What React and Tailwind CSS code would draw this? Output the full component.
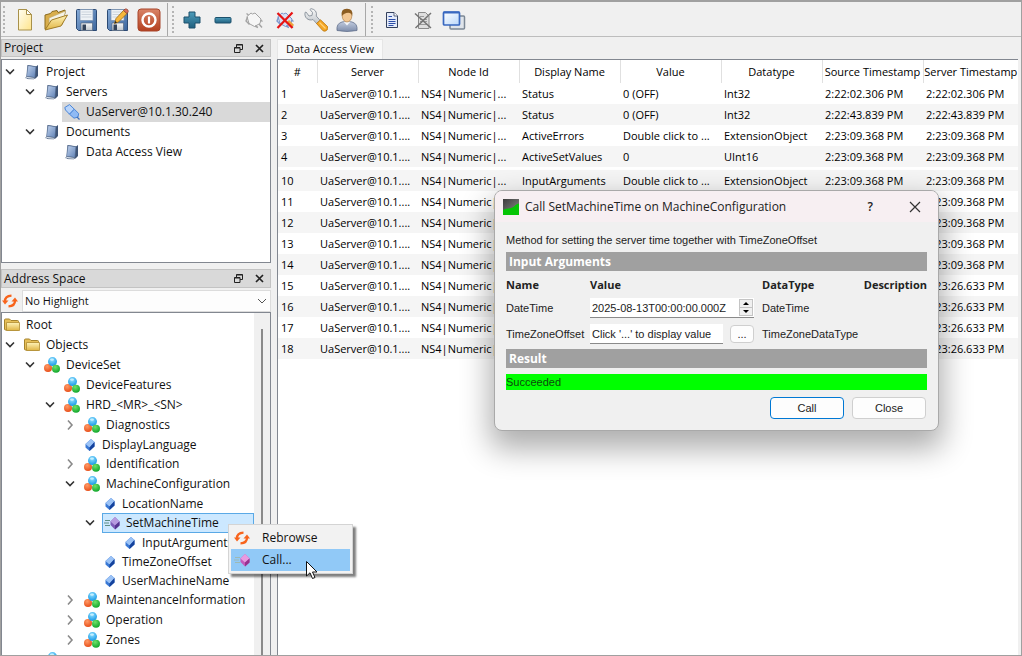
import React from "react";

/* ---------- shared gradients ---------- */

function Gradients() {
  return (
    <svg className="absolute size-0" aria-hidden="true">
      <defs>
        <linearGradient id="paper" x1="0" y1="0" x2="1" y2="1">
          <stop offset="0" stopColor="#fffef2" />
          <stop offset="1" stopColor="#ffe48a" />
        </linearGradient>
        <linearGradient id="folder" x1="0" y1="0" x2="0" y2="1">
          <stop offset="0" stopColor="#fff3b8" />
          <stop offset="1" stopColor="#e0b545" />
        </linearGradient>
        <linearGradient id="disk" x1="0" y1="0" x2="1" y2="1">
          <stop offset="0" stopColor="#86abd8" />
          <stop offset="1" stopColor="#3c659c" />
        </linearGradient>
        <linearGradient id="metal" x1="0" y1="0" x2="0" y2="1">
          <stop offset="0" stopColor="#fafafa" />
          <stop offset="1" stopColor="#bdc3c9" />
        </linearGradient>
        <linearGradient id="power" x1="0" y1="0" x2="0" y2="1">
          <stop offset="0" stopColor="#d98468" />
          <stop offset="1" stopColor="#b4401f" />
        </linearGradient>
        <linearGradient id="teal" x1="0" y1="0" x2="0" y2="1">
          <stop offset="0" stopColor="#4d9cba" />
          <stop offset="1" stopColor="#20607f" />
        </linearGradient>
        <linearGradient id="book" x1="0" y1="0" x2="1" y2="1">
          <stop offset="0" stopColor="#c3d4ee" />
          <stop offset="1" stopColor="#5e80b4" />
        </linearGradient>
        <linearGradient id="shirt" x1="0" y1="0" x2="0" y2="1">
          <stop offset="0" stopColor="#c5cfe2" />
          <stop offset="1" stopColor="#7e8dab" />
        </linearGradient>
        <linearGradient id="screen" x1="0" y1="0" x2="1" y2="1">
          <stop offset="0" stopColor="#ffffff" />
          <stop offset="1" stopColor="#b9d7fa" />
        </linearGradient>
        <radialGradient id="ballBlue" cx="0.45" cy="0.3" r="0.7">
          <stop offset="0" stopColor="#8fe0ff" />
          <stop offset="1" stopColor="#1697e6" />
        </radialGradient>
        <radialGradient id="ballRed" cx="0.4" cy="0.3" r="0.7">
          <stop offset="0" stopColor="#ff9a66" />
          <stop offset="1" stopColor="#e8501a" />
        </radialGradient>
        <radialGradient id="ballGreen" cx="0.4" cy="0.3" r="0.7">
          <stop offset="0" stopColor="#6fe06a" />
          <stop offset="1" stopColor="#12a82c" />
        </radialGradient>
        <linearGradient id="app" x1="0" y1="0" x2="1" y2="1">
          <stop offset="0" stopColor="#3c3c3c" />
          <stop offset="1" stopColor="#8d8d8d" />
        </linearGradient>
      </defs>
    </svg>
  );
}

/* ---------- toolbar icons ---------- */

const NewIcon = () => (
  <svg className="size-6" viewBox="0 0 24 24">
    <path d="M5.500 1.500h8l5 5v15.500h-13z" fill="url(#paper)" stroke="#a8914a" />
    <path d="M13.500 1.500v5h5z" fill="#fff" stroke="#a8914a" strokeLinejoin="round" />
  </svg>
);

const OpenIcon = () => (
  <svg className="size-6" viewBox="0 0 24 24">
    <path d="M1 21V7l5.500-1.500L8 3.500l5-1 1 2 7-2.500v3L16 17z" fill="#d9ae4c" stroke="#8a6a1e" strokeLinejoin="round" />
    <path d="M5 10l16.500-7-3 13.500-13 4z" fill="#f4f2e6" stroke="#b9a466" strokeWidth=".6" />
    <path d="M1 22L7.500 12l16-5L17 18z" fill="url(#folder)" stroke="#a07c28" strokeLinejoin="round" />
  </svg>
);

const Floppy = () => (
  <>
    <path d="M1.500 2.500q0-1 1-1h18q1 0 1 1v20H3.500l-2-2z" fill="url(#disk)" stroke="#2c4a74" />
    <path d="M5 1.500h13v11H5z" fill="#eef2f6" stroke="#7890b0" strokeWidth=".7" />
    <path d="M6.500 4h10M6.500 6.500h10M6.500 9h10" stroke="#c7d0da" strokeWidth=".9" />
    <path d="M6 15h11.500v7.500H6z" fill="url(#metal)" stroke="#56697f" strokeWidth=".7" />
    <path d="M7.500 16.500h3.500V22H7.500z" fill="#33435a" />
  </>
);

const SaveIcon = () => (
  <svg className="size-6" viewBox="0 0 24 24"><Floppy /></svg>
);

const SaveAsIcon = () => (
  <svg className="size-6" viewBox="0 0 24 24">
    <Floppy />
    <path d="M8.500 15.500l1.500-5L17.500 2.500l3.500 3-8.500 8.500z" fill="#f6b73c" stroke="#9a6a12" strokeWidth=".8" />
    <path d="M17.500 2.500L19 1q1.500-.5 2.700.8t.3 2.400L21 5.500z" fill="#d8705a" stroke="#8d3c2c" strokeWidth=".6" />
    <path d="M8.500 15.500l.8-2.500 1.700 1.500z" fill="#222" />
  </svg>
);

const PowerIcon = () => (
  <svg className="size-6" viewBox="0 0 24 24">
    <rect x="1" y="1" width="22" height="22" rx="3" fill="url(#power)" stroke="#a8452a" />
    <circle cx="12" cy="12" r="6.500" fill="none" stroke="#fff" strokeWidth="2.400" />
    <path d="M12 8.500v7" stroke="#fff" strokeWidth="2.200" />
  </svg>
);

const PlusIcon = () => (
  <svg className="size-6" viewBox="0 0 24 24">
    <path d="M9 4h6v5h5v6h-5v5H9v-5H4V9h5z" fill="url(#teal)" stroke="#1c516c" strokeLinejoin="round" />
  </svg>
);

const MinusIcon = () => (
  <svg className="size-6" viewBox="0 0 24 24">
    <rect x="4" y="9.500" width="16" height="5.500" rx="1" fill="url(#teal)" stroke="#1c516c" />
  </svg>
);

const Plug = ({ fill, stroke }) => (
  <g fill={fill} stroke={stroke} strokeLinejoin="round">
    <path d="M5 8.500L9 5l1.500 1L13 5l6 6-1 4.500-5.500 3L7 15.500z" />
    <path d="M5.500 9L4 13l3.500 3.500M13 18l3 1.500M18.500 12l2 1.500M4.500 5.500l2 1.500M17 16l3 3.500" fill="none" strokeWidth="1.400" />
  </g>
);

const ConnectIcon = () => (
  <svg className="size-6" viewBox="0 0 24 24"><Plug fill="#f6f6f6" stroke="#a3a3a3" /></svg>
);

const DisconnectIcon = () => (
  <svg className="size-6" viewBox="0 0 24 24">
    <Plug fill="#d6e0f6" stroke="#7c96cc" />
    <path d="M15 13l5 5" stroke="#eda23c" strokeWidth="3" />
    <path d="M4.500 5l15 15M19.500 4.500l-15 15.500" stroke="#e81414" strokeWidth="2.200" />
  </svg>
);

const WrenchIcon = () => (
  <svg className="size-6" viewBox="0 0 24 24">
    <path d="M1 4.500Q.2 10 5 11.800q2.500.5 4-.3l4 4.500 3.500-3.200-4.200-4.700Q13.500 1.800 7 .6L6 1.500l2.500 3-.5 3-3 .5L2 4z" fill="url(#metal)" stroke="#87909a" strokeWidth=".9" strokeLinejoin="round" />
    <path d="M12.500 15.500l4-3.700 7 6.700q1 2-.7 3.700t-3.800.6z" fill="#f5a623" stroke="#b6740c" strokeWidth=".8" />
    <path d="M15.500 14.500l6 6" stroke="#ffd27a" strokeWidth="1.200" />
  </svg>
);

const UserIcon = () => (
  <svg className="size-6" viewBox="0 0 24 24">
    <path d="M2 22.500q-.8-7 5-8.500l5-1 5 1q5.800 1.500 5 8.500-10 2-20 0z" fill="url(#shirt)" stroke="#62708c" strokeWidth=".8" />
    <path d="M8.500 13.500l3.500 4 3.500-4" fill="#f4f6fa" />
    <ellipse cx="12" cy="8" rx="4.800" ry="6" fill="#f3c793" stroke="#a87336" strokeWidth=".6" />
    <path d="M6.800 8Q5.500.6 12 .8q6.500 0 5.200 7.200-1-3.200-4-3.200Q9 5 6.800 8z" fill="#8c5d22" />
  </svg>
);

const DocIcon = () => (
  <svg className="size-6" viewBox="0 0 24 24">
    <path d="M6.500 4.500h7.500l3.500 3.500v11.500h-11z" fill="#e4ebfa" stroke="#33405c" />
    <path d="M14 4.500V8h3.500" fill="#fff" stroke="#33405c" strokeWidth=".8" />
    <path d="M8.500 8.500h3.500M8.500 11.500h7M8.500 13.500h7M8.500 15.500h7M8.500 17.500h5" stroke="#2c4ea8" />
  </svg>
);

const DocOffIcon = () => (
  <svg className="size-6" viewBox="0 0 24 24">
    <path d="M7.500 4.500h7L18 8v12.500H7.500z" fill="#dedede" stroke="#8a8a8a" />
    <path d="M9 8.500h4M9 11.500h7M9 13.500h7M9 16.500h7" stroke="#9a9a9a" />
    <path d="M4 5.500l16 14.500M20 5L4.500 20" stroke="#747474" strokeWidth="1.500" />
  </svg>
);

const WindowsIcon = () => (
  <svg className="size-6" viewBox="0 0 24 24">
    <rect x="8" y="8" width="14.500" height="13" rx="1" fill="#dfe4ea" stroke="#7b8794" strokeWidth="1.500" />
    <rect x="1.500" y="4" width="16" height="13" rx="1" fill="url(#screen)" stroke="#3868c0" strokeWidth="1.700" />
    <path d="M1.500 4.500h16" stroke="#3868c0" strokeWidth="2" />
  </svg>
);

/* ---------- tree and panel icons ---------- */

const BookIcon = () => (
  <svg className="size-4 shrink-0" viewBox="0 0 16 16">
    <path d="M3.500 1l8.500 1.500 2-1.500v11l-2.500 2.500-8.500.5z" fill="#3f5475" />
    <path d="M4 1.500l8 1.200-1 11L2.500 12.500z" fill="url(#book)" stroke="#4a6187" strokeWidth=".6" />
    <path d="M1.500 13.700l1.300-1.200 8.200 1.200-1 1.300-6-.3z" fill="#dfe6f0" stroke="#3f5475" strokeWidth=".5" />
  </svg>
);

const ServerPlugIcon = () => (
  <svg className="size-4 shrink-0" viewBox="0 0 16 16">
    <path d="M.8 3.500L5.500.6l4.800 4.600-4.800 5L1.500 6z" fill="#b8d4fa" stroke="#4b86d8" strokeLinejoin="round" />
    <path d="M10.300 5.200l4.400 4.300-.7 3.500-4 1.200-4.500-4z" fill="#8fbaf4" stroke="#4b86d8" strokeLinejoin="round" />
    <path d="M13 13l2.500 2.500" stroke="#3f6fb8" strokeWidth="1.300" />
  </svg>
);

const FolderIcon = () => (
  <svg className="size-4 shrink-0" viewBox="0 0 16 16">
    <path d="M.5 3q0-1 1-1h4L7 3.500h6.500q1 0 1 1V13h-13q-1 0-1-1z" fill="#e6bf58" stroke="#a5832c" />
    <path d="M2.500 5.500h13v8h-13z" fill="url(#folder)" stroke="#b08c30" strokeWidth=".8" />
  </svg>
);

const ObjectIcon = () => (
  <svg className="size-4 shrink-0" viewBox="0 0 16 16">
    <circle cx="4" cy="11" r="4" fill="url(#ballRed)" />
    <circle cx="8.500" cy="4.600" r="4.500" fill="url(#ballBlue)" />
    <circle cx="12" cy="11.700" r="4" fill="url(#ballGreen)" />
    <ellipse cx="8" cy="2.600" rx="2" ry="1.200" fill="#d6f5ff" opacity=".8" />
  </svg>
);

const VariableIcon = () => (
  <svg className="h-4 w-3 shrink-0" viewBox="0 0 12 16">
    <path d="M7 2l3.500 3v4.500L5.500 14 1.500 10.500V7z" fill="#3b7ad6" />
    <path d="M7 2l3.500 3-5 5.500L1.500 7z" fill="#9cc3f6" />
    <path d="M5.500 10.500V14l5-4.500V5z" fill="#15429c" />
  </svg>
);

const MethodIcon = ({ pink }) => (
  <svg className="size-4 shrink-0" viewBox="0 0 16 16">
    <path d="M1 5.500h5M0 8h5M1 10.500h5" stroke={pink ? "#9db9b4" : "#5f8f86"} strokeWidth="1" />
    <path d="M11 2l4.500 4.500v4L11 14.500 6.500 10V6.500z" fill={pink ? "#c458bc" : "#7d5cb8"} />
    <path d="M11 2l4.500 4.500L11 10.500l-4.500-4z" fill={pink ? "#e79ae0" : "#b69be0"} />
    <path d="M11 10.500v4l4.500-4v-4z" fill={pink ? "#97308f" : "#543490"} />
  </svg>
);

const RefreshIcon = () => (
  <svg className="size-4 shrink-0" viewBox="0 0 16 16">
    <g fill="none" stroke="#f8641c" strokeWidth="2.300">
      <path d="M3 8.500Q2.800 3 9.500 2.700" />
      <path d="M13 7.500Q13.200 13 6.500 13.300" />
    </g>
    <path d="M0 7.500h6.500L3 11.500zM16 8.500H9.500L13 4.500z" fill="#f8641c" />
  </svg>
);

const Chevron = ({ open }) => (
  <svg className="size-3" viewBox="0 0 12 12" fill="none" stroke={open ? "#333" : "#8a8a8a"} strokeWidth="1.600">
    {open ? <path d="M2 3.500l4 4 4-4" /> : <path d="M4 1.500l4 4.500-4 4.500" />}
  </svg>
);

/* ---------- data ---------- */

const projectTree = [
  { depth: 0, open: true, icon: BookIcon, label: "Project" },
  { depth: 1, open: true, icon: BookIcon, label: "Servers" },
  { depth: 2, icon: ServerPlugIcon, label: "UaServer@10.1.30.240", muted: true },
  { depth: 1, open: true, icon: BookIcon, label: "Documents" },
  { depth: 2, icon: BookIcon, label: "Data Access View" },
];

const addressTree = [
  { depth: -1, icon: FolderIcon, label: "Root" },
  { depth: 0, open: true, icon: FolderIcon, label: "Objects" },
  { depth: 1, open: true, icon: ObjectIcon, label: "DeviceSet" },
  { depth: 2, icon: ObjectIcon, label: "DeviceFeatures" },
  { depth: 2, open: true, icon: ObjectIcon, label: "HRD_<MR>_<SN>" },
  { depth: 3, open: false, icon: ObjectIcon, label: "Diagnostics" },
  { depth: 3, icon: VariableIcon, label: "DisplayLanguage" },
  { depth: 3, open: false, icon: ObjectIcon, label: "Identification" },
  { depth: 3, open: true, icon: ObjectIcon, label: "MachineConfiguration" },
  { depth: 4, icon: VariableIcon, label: "LocationName" },
  { depth: 4, open: true, icon: MethodIcon, label: "SetMachineTime", selected: true },
  { depth: 5, icon: VariableIcon, label: "InputArguments" },
  { depth: 4, icon: VariableIcon, label: "TimeZoneOffset" },
  { depth: 4, icon: VariableIcon, label: "UserMachineName" },
  { depth: 3, open: false, icon: ObjectIcon, label: "MaintenanceInformation" },
  { depth: 3, open: false, icon: ObjectIcon, label: "Operation" },
  { depth: 3, open: false, icon: ObjectIcon, label: "Zones" },
  { depth: 1, icon: ObjectIcon, label: "" },
];

const rows = [
  ["1", "Status", "0 (OFF)", "Int32", "2:22:02.306 PM"],
  ["2", "Status", "0 (OFF)", "Int32", "2:22:43.839 PM"],
  ["3", "ActiveErrors", "Double click to ...", "ExtensionObject", "2:23:09.368 PM"],
  ["4", "ActiveSetValues", "0", "UInt16", "2:23:09.368 PM"],
  null,
  ["10", "InputArguments", "Double click to ...", "ExtensionObject", "2:23:09.368 PM"],
  ["11", "", "", "", "2:23:09.368 PM"],
  ["12", "", "", "", "2:23:09.368 PM"],
  ["13", "", "", "", "2:23:09.368 PM"],
  ["14", "", "", "", "2:23:09.368 PM"],
  ["15", "", "", "", "2:23:26.633 PM"],
  ["16", "", "", "", "2:23:26.633 PM"],
  ["17", "", "", "", "2:23:26.633 PM"],
  ["18", "", "", "", "2:23:26.633 PM"],
];

const indent = {
  "-1": "pl-0",
  0: "pl-0",
  1: "pl-5",
  2: "pl-10",
  3: "pl-[60px]",
  4: "pl-20",
  5: "pl-[100px]",
};

/* ---------- pieces ---------- */

function Tree({ items, label }) {
  return (
    <ul role="tree" aria-label={label}>
      {items.map((n, i) => {
        const Icon = n.icon;
        const small = Icon === VariableIcon;
        return (
          <li
            key={i}
            role="treeitem"
            aria-selected={!!n.selected}
            className={`flex items-stretch ${small ? "h-[19px]" : "h-5"} ${indent[n.depth]}`}
          >
            {n.depth >= 0 && (
              <span className="flex w-5 shrink-0 items-center pl-[2px]">
                {n.open !== undefined && (
                  <button type="button" aria-label={n.open ? "Collapse" : "Expand"}>
                    <Chevron open={n.open} />
                  </button>
                )}
              </span>
            )}
            <span
              className={`flex min-w-0 items-center gap-[6px] whitespace-nowrap ${
                n.selected
                  ? "grow border border-dotted border-[#123f66] bg-[#cce8ff] pl-px outline outline-[#5aa9e6] -outline-offset-1"
                  : "pl-[2px]"
              } ${n.muted ? "grow bg-[#d9d9d9]" : ""}`}
            >
              <Icon />
              {n.label}
            </span>
          </li>
        );
      })}
    </ul>
  );
}

function DockTitle({ children }) {
  return (
    <header className="flex h-[19px] items-center border border-[#c3c3c3] bg-[#d9d9d9] pr-[6px] pl-[2px]">
      <h2 className="grow">{children}</h2>
      <button type="button" aria-label="Float" className="mr-3">
        <svg className="size-[9px]" viewBox="0 0 9 9" fill="none" stroke="#222">
          <path d="M2.500 3V.5h6v5H6M2.500 1h6M.5 3.500h5.500v5H.5zM.5 4h5.500" />
        </svg>
      </button>
      <button type="button" aria-label="Close">
        <svg className="size-[9px]" viewBox="0 0 9 9" stroke="#222" strokeWidth="1.700">
          <path d="M1 1l7 7M8 1L1 8" />
        </svg>
      </button>
    </header>
  );
}

function Handle() {
  return <span className="my-[3px] w-[3px] shrink-0 border-l-2 border-dotted border-[#b4b4b4]" />;
}

function ToolButton({ label, children }) {
  return (
    <button type="button" aria-label={label} className="flex w-[31px] items-center justify-center">
      {children}
    </button>
  );
}

function Toolbar() {
  return (
    <div role="toolbar" className="flex h-[35px] shrink-0 border-b border-[#bdbdbd] bg-[#f0f0f0] pt-px pl-[2px]">
      <Handle />
      <div className="flex pr-[3px] pl-[3px]">
        <ToolButton label="New"><NewIcon /></ToolButton>
        <ToolButton label="Open"><OpenIcon /></ToolButton>
        <ToolButton label="Save"><SaveIcon /></ToolButton>
        <ToolButton label="Save as"><SaveAsIcon /></ToolButton>
        <ToolButton label="Exit"><PowerIcon /></ToolButton>
      </div>
      <div className="flex border-l border-[#a8a8a8] pr-[3px] pl-[4px]">
        <Handle />
        <span className="w-px" />
        <ToolButton label="Add server"><PlusIcon /></ToolButton>
        <ToolButton label="Remove server"><MinusIcon /></ToolButton>
        <ToolButton label="Connect"><ConnectIcon /></ToolButton>
        <ToolButton label="Disconnect"><DisconnectIcon /></ToolButton>
        <ToolButton label="Properties"><WrenchIcon /></ToolButton>
        <ToolButton label="Change user"><UserIcon /></ToolButton>
      </div>
      <div className="flex border-l border-[#a8a8a8] pl-[5px]">
        <Handle />
        <span className="w-[2px]" />
        <ToolButton label="Add document"><DocIcon /></ToolButton>
        <ToolButton label="Remove document"><DocOffIcon /></ToolButton>
        <ToolButton label="Windows"><WindowsIcon /></ToolButton>
      </div>
    </div>
  );
}

function DataTable() {
  const headers = ["#", "Server", "Node Id", "Display Name", "Value", "Datatype", "Source Timestamp", "Server Timestamp"];
  return (
    <table className="w-full table-fixed border-collapse text-left text-[11px] text-black">
      <colgroup>
        <col className="w-[39px]" />
        <col className="w-[101px]" />
        <col className="w-[101px]" />
        <col className="w-[101px]" />
        <col className="w-[101px]" />
        <col className="w-[101px]" />
        <col className="w-[101px]" />
        <col />
      </colgroup>
      <thead>
        <tr className="h-[23px]">
          {headers.map((h, i) => (
            <th key={h} className={`p-0 text-center font-normal whitespace-nowrap ${i < 7 ? "border-r border-[#e0e0e0]" : ""}`}>
              {h}
            </th>
          ))}
        </tr>
      </thead>
      <tbody>
        {rows.map((r, i) =>
          r === null ? (
            <tr key={i} className="h-[3px]"><td colSpan={8} className="p-0" /></tr>
          ) : (
            <tr key={i} className={`h-[21px] ${i % 2 === 1 ? "bg-[#f5f5f5]" : ""}`}>
              {[r[0], "UaServer@10.1....", "NS4|Numeric|...", r[1], r[2], r[3], r[4], r[4]].map((c, k) => (
                <td key={k} className="overflow-hidden p-0 pl-[3px] whitespace-nowrap">{c}</td>
              ))}
            </tr>
          ),
        )}
      </tbody>
    </table>
  );
}

function CallDialog() {
  return (
    <section
      role="dialog"
      aria-label="Call SetMachineTime on MachineConfiguration"
      className="absolute top-[188px] left-[493px] w-[445px] overflow-hidden rounded-lg border border-[#a9a9a9] bg-[#f0f0f0] font-['Liberation_Sans',sans-serif] text-[11px] leading-4 text-[#222] shadow-[0_14px_30px_4px_rgba(0,0,0,0.32)]"
    >
      <header className="flex h-[31px] items-center bg-[#f7eff2] pr-[17px] pl-2 font-['Open_Sans','Noto_Sans',sans-serif] text-xs">
        <svg className="mr-[6px] size-4" viewBox="0 0 16 16">
          <path d="M0 0h16v16H0z" fill="url(#app)" />
          <path d="M0 16v-5q2-1.500 5-1.500 5-.500 7-3Q13.500 5 16 4.500V16z" fill="#06c506" />
        </svg>
        <h2 className="grow">Call SetMachineTime on MachineConfiguration</h2>
        <button type="button" aria-label="Help" className="mr-9 font-semibold">?</button>
        <button type="button" aria-label="Close dialog">
          <svg className="size-3" viewBox="0 0 12 12" stroke="#333" strokeWidth="1.200">
            <path d="M1 1l10 10M11 1L1 11" />
          </svg>
        </button>
      </header>

      <div className="px-[11px] pt-[10px] pb-[11px]">
        <p>Method for setting the server time together with TimeZoneOffset</p>
        <h3 className="mt-[4px] h-[19px] bg-[#a0a0a0] pl-[3px] font-['Open_Sans',sans-serif] text-xs leading-[19px] font-bold text-white">Input Arguments</h3>

        <div className="mt-[6px] grid grid-cols-[84px_164px_1fr_66px] items-center gap-y-[5px]">
          <b className="font-['Open_Sans',sans-serif]">Name</b>
          <b className="font-['Open_Sans',sans-serif]">Value</b>
          <b className="pl-2 font-['Open_Sans',sans-serif]">DataType</b>
          <b className="justify-self-end font-['Open_Sans',sans-serif]">Description</b>

          <label htmlFor="dt">DateTime</label>
          <span className="flex h-5 items-stretch border-b border-[#8a8a8a] bg-white">
            <input id="dt" defaultValue="2025-08-13T00:00:00.000Z" className="w-0 grow bg-white px-[2px] outline-none" />
            <span className="m-px flex w-[14px] flex-col border border-[#c4c4c4] bg-[#f0f0f0]">
              <button type="button" aria-label="Increase" className="flex grow items-center justify-center border-b border-[#c4c4c4]">
                <svg className="h-[3px] w-[6px]" viewBox="0 0 6 3"><path d="M0 3l3-3 3 3z" /></svg>
              </button>
              <button type="button" aria-label="Decrease" className="flex grow items-center justify-center">
                <svg className="h-[3px] w-[6px]" viewBox="0 0 6 3"><path d="M0 0l3 3 3-3z" /></svg>
              </button>
            </span>
          </span>
          <span className="pl-2">DateTime</span>
          <span />

          <label htmlFor="tz">TimeZoneOffset</label>
          <span className="flex h-[22px] items-center justify-between">
            <input id="tz" defaultValue="Click '...' to display value" className="h-5 w-[133px] border-b border-[#8a8a8a] bg-white px-[2px] outline-none" />
            <button type="button" className="h-[18px] w-6 rounded border border-[#cfcfcf] bg-[#fdfdfd] leading-3">...</button>
          </span>
          <span className="pl-2">TimeZoneDataType</span>
        </div>

        <h3 className="mt-[4px] h-[19px] bg-[#a0a0a0] pl-[3px] font-['Open_Sans',sans-serif] text-xs leading-[19px] font-bold text-white">Result</h3>
        <output className="mt-[6px] block h-4 bg-[#00ff00] text-[#0d4a0d]">Succeeded</output>

        <div className="mt-[7px] flex justify-end gap-2 pr-px">
          <button type="button" className="h-[22px] w-[74px] rounded border border-[#0078d4] bg-[#fdfdfd]">Call</button>
          <button type="button" className="h-[22px] w-[74px] rounded border border-[#cfcfcf] bg-[#fdfdfd]">Close</button>
        </div>
      </div>
    </section>
  );
}

function ContextMenu() {
  return (
    <div
      role="menu"
      className="absolute top-[522px] left-[227px] w-[125px] border border-[#d4d4d4] bg-[#f2f2f2] p-[2px] shadow-[3px_3px_2px_rgba(0,0,0,0.5)]"
    >
      <button type="button" role="menuitem" className="flex h-[22px] w-full items-center gap-3 pl-[3px]">
        <RefreshIcon />
        Rebrowse
      </button>
      <button type="button" role="menuitem" className="flex h-[22px] w-full items-center gap-3 bg-[#91c9f7] pl-[3px]">
        <MethodIcon pink />
        Call...
      </button>
    </div>
  );
}

export default function App() {
  return (
    <div className="relative flex h-screen flex-col overflow-hidden border border-t-2 border-[#a0a0a0] bg-[#f0f0f0] font-['Open_Sans','Noto_Sans',sans-serif] text-xs leading-4 text-[#111]">
      <Gradients />
      <Toolbar />
      <div className="flex min-h-0 grow gap-[6px] pt-[2px] pr-[3px]">
        <aside className="flex w-[270px] shrink-0 flex-col">
          <DockTitle>Project</DockTitle>
          <div className="mt-[2px] h-[204px] shrink-0 border border-[#828790] bg-white pt-[2px]">
            <Tree items={projectTree} label="Project" />
          </div>
          <div className="mt-[6px]"><DockTitle>Address Space</DockTitle></div>
          <div className="mt-[2px] flex h-[22px] shrink-0 items-center">
            <button type="button" aria-label="Refresh" className="mr-1 ml-px"><RefreshIcon /></button>
            <div className="relative h-full grow border border-[#dcdcdc] bg-[#fdfdfd]">
              <select aria-label="Highlight" className="h-full w-full appearance-none pl-[2px] text-[11px] outline-none">
                <option>No Highlight</option>
              </select>
              <svg className="pointer-events-none absolute top-[6px] right-[3px] h-2 w-[10px]" viewBox="0 0 10 8" fill="none" stroke="#555">
                <path d="M1 2l4 4 4-4" />
              </svg>
            </div>
          </div>
          <div className="flex min-h-0 grow border border-b-0 border-[#828790] bg-white">
            <div className="min-w-0 grow overflow-hidden pt-[2px]">
              <Tree items={addressTree} label="Address space" />
            </div>
            <div className="flex w-4 shrink-0 justify-center bg-[#f0f0f0] pt-4">
              <span className="w-[2px] bg-[#8a8a8a]" />
            </div>
          </div>
        </aside>

        <main className="flex min-w-0 grow flex-col">
          <div role="tablist" className="flex h-5 shrink-0">
            <button type="button" role="tab" aria-selected="true" className="border border-b-0 border-[#e6e6e6] bg-[#f9f9f9] px-2 pb-[2px] text-[11px] whitespace-nowrap">
              Data Access View
            </button>
          </div>
          <div className="min-h-0 grow overflow-hidden border-t border-l border-[#828790] bg-white">
            <DataTable />
          </div>
        </main>
      </div>

      <CallDialog />
      <ContextMenu />
      <svg className="pointer-events-none absolute top-[558px] left-[304px] h-5 w-[14px]" viewBox="0 0 14 20">
        <path d="M1.500 1.500v14.500l3.500-3.200 2.500 5.700 2.500-1-2.500-5.500h4.500z" fill="#fff" stroke="#111" />
      </svg>
    </div>
  );
}
